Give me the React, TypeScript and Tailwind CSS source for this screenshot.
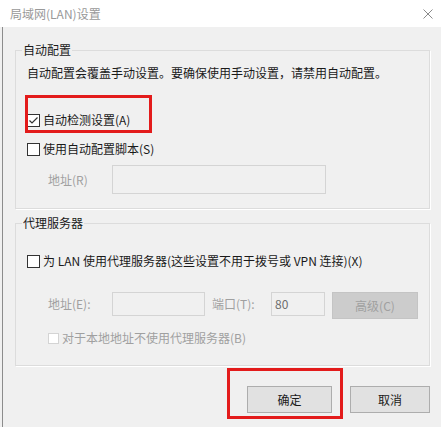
import React from 'react';

const Checkbox: React.FC<{ checked?: boolean; disabled?: boolean }> = ({ checked, disabled }) => (
  <span
    className={`flex shrink-0 items-center justify-center border bg-white ${
      disabled ? 'h-[11px] w-[11px] border-[#d4d4d4]' : 'h-[13px] w-[13px] border-[#333333]'
    }`}
  >
    {checked && (
      <svg width="11" height="11" viewBox="0 0 11 11">
        <polyline points="1.5,5.5 4,8 9.5,2.5" fill="none" stroke="#333333" strokeWidth="1.2" />
      </svg>
    )}
  </span>
);

export default function App() {
  return (
    <div className="relative flex h-[427px] w-[441px] flex-col overflow-hidden bg-[#f0f0f0] font-['Noto_Sans_CJK_SC','Microsoft_YaHei',sans-serif] text-[12px] text-[#1a1a1a]">
      {/* Title bar */}
      <div className="flex h-[27px] shrink-0 items-center justify-between bg-white pl-[10px] pr-[8px]">
        <span className="leading-[16px] text-[#999999]">局域网(LAN)设置</span>
        <svg width="10" height="10" viewBox="0 0 10 10">
          <path d="M0.5 0.5 L9.5 9.5 M9.5 0.5 L0.5 9.5" stroke="#8a8a8a" strokeWidth="1" />
        </svg>
      </div>

      <div className="ml-[2px] flex flex-1 flex-col border-l border-[#8c8c8c] pl-[12px]">
        {/* 自动配置 */}
        <fieldset className="mt-[15px] h-[167px] w-[415px] border border-[#dcdcdc] shadow-[1px_1px_0_#ffffff]">
          <legend className="ml-[6px] px-[1px] leading-[16px]">自动配置</legend>
          <div className="flex flex-col pl-[11px]">
            <p className="mt-[7px] leading-[16px]">自动配置会覆盖手动设置。要确保使用手动设置，请禁用自动配置。</p>
            <label className="mt-[31px] flex h-[16px] items-center gap-[3px]">
              <Checkbox checked />
              <span className="leading-[16px]">自动检测设置(A)</span>
            </label>
            <label className="mt-[13px] flex h-[16px] items-center gap-[3px]">
              <Checkbox />
              <span className="leading-[16px]">使用自动配置脚本(S)</span>
            </label>
            <div className="mt-[8px] flex h-[29px] items-center pl-[21px]">
              <span className="w-[64px] text-[#a0a0a0]">地址(R)</span>
              <div className="h-[29px] w-[214px] border border-[#d4d4d4] bg-[#f0f0f0]" />
            </div>
          </div>
        </fieldset>

        {/* 代理服务器 */}
        <fieldset className="mt-[6px] h-[151px] w-[415px] border border-[#dcdcdc] shadow-[1px_1px_0_#ffffff]">
          <legend className="ml-[6px] px-[1px] leading-[16px]">代理服务器</legend>
          <div className="flex flex-col pl-[11px]">
            <label className="mt-[22px] flex h-[16px] items-center gap-[3px]">
              <Checkbox />
              <span className="leading-[16px]">为 LAN 使用代理服务器(这些设置不用于拨号或 VPN 连接)(X)</span>
            </label>
            <div className="mt-[23px] flex items-start pl-[21px]">
              <span className="w-[64px] leading-[24px] text-[#a0a0a0]">地址(E):</span>
              <div className="h-[24px] w-[93px] border border-[#d4d4d4] bg-[#f0f0f0]" />
              <span className="ml-[7px] w-[59px] leading-[24px] text-[#a0a0a0]">端口(T):</span>
              <div className="h-[24px] w-[54px] border border-[#d4d4d4] bg-[#f0f0f0] pl-[3px] leading-[22px] text-[#6d6d6d]">80</div>
              <button className="ml-[7px] h-[27px] w-[86px] border border-[#c4c4c4] bg-[#cccccc] text-[#a0a0a0]">高级(C)</button>
            </div>
            <label className="mt-[11px] flex h-[16px] items-center gap-[3px] pl-[21px]">
              <Checkbox disabled />
              <span className="leading-[16px] text-[#a0a0a0]">对于本地地址不使用代理服务器(B)</span>
            </label>
          </div>
        </fieldset>

        {/* Buttons */}
        <div className="mt-[20px] flex justify-end gap-[18px] pr-[11px]">
          <button className="h-[27px] w-[85px] border border-[#adadad] bg-[#e1e1e1]">确定</button>
          <button className="h-[27px] w-[80px] border border-[#adadad] bg-[#e1e1e1]">取消</button>
        </div>
      </div>

      {/* Red highlight boxes */}
      <div className="pointer-events-none absolute left-[25px] top-[95px] h-[38px] w-[127px] border-[3px] border-[#e31b1b]" />
      <div className="pointer-events-none absolute left-[227px] top-[368px] h-[51px] w-[116px] border-[3px] border-[#e31b1b]" />
    </div>
  );
}
